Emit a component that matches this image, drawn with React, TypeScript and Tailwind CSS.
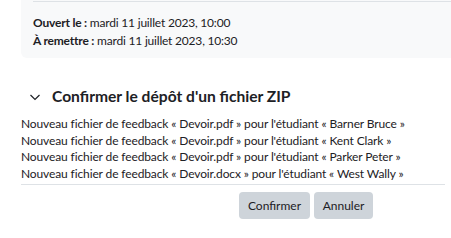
import React from "react";

const rows = [
  ["Devoir.pdf", "Barner Bruce"],
  ["Devoir.pdf", "Kent Clark"],
  ["Devoir.pdf", "Parker Peter"],
  ["Devoir.docx", "West Wally"],
];

export default function App() {
  return (
    <div
      className="w-[451px] h-[238px] bg-white overflow-hidden text-[#1d2125]"
      style={{ fontFamily: 'Lato, "Noto Sans", sans-serif' }}
    >
      <div className="ml-[21px] w-[440px] h-[58px] bg-[#f8f9fa] rounded-b-[6px] pl-[12px] pt-px">
        <div className="border-t border-[#dee2e6]" />
        <div className="pt-[12px] text-[12px] leading-[18px] tracking-[-0.2px]">
          <div>
            <span className="font-bold">Ouvert le :</span> mardi 11 juillet 2023, 10:00
          </div>
          <div>
            <span className="font-bold">À remettre :</span> mardi 11 juillet 2023, 10:30
          </div>
        </div>
      </div>
      <div className="mt-[27px] ml-[29px] flex items-center gap-[11px] h-[24px]">
        <svg width="12" height="12" viewBox="0 0 12 12" className="text-[#1d2125]">
          <path d="M1.5 4 L6 8.5 L10.5 4" fill="none" stroke="currentColor" strokeWidth="1.2" />
        </svg>
        <span className="text-[15.6px] font-bold">Confirmer le dépôt d'un fichier ZIP</span>
      </div>
      <div className="ml-[21px] mr-[6px] mt-[7px] border-b border-[#dee2e6] pb-[2px]">
        {rows.map(([f, s]) => (
          <div key={s} className="text-[12px] leading-[16.5px] tracking-[-0.12px] whitespace-nowrap">
            Nouveau fichier de feedback « {f} » pour l'étudiant « {s} »
          </div>
        ))}
      </div>
      <div className="mt-[7px] flex gap-[4px] pl-[239px]">
        <button className="h-[27px] w-[71px] rounded-[4px] bg-[#ced4da] text-[12px] text-[#1d2125]">
          Confirmer
        </button>
        <button className="h-[27px] w-[59px] rounded-[4px] bg-[#ced4da] text-[12px] text-[#1d2125]">
          Annuler
        </button>
      </div>
    </div>
  );
}
